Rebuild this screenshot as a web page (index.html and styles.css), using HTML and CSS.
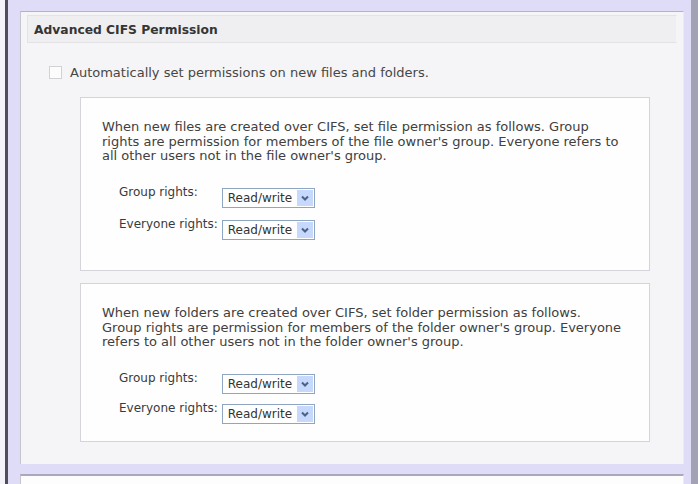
FILE: index.html
```html
<!DOCTYPE html>
<html>
<head>
<meta charset="utf-8">
<link rel="stylesheet" href="styles.css">
</head>
<body>
<div class="page">
  <div class="panel">
    <div class="panel-head">Advanced CIFS Permission</div>
    <label class="auto-row"><span class="check"></span><span>Automatically set permissions on new files and folders.</span></label>

    <div class="box box-files">
      <p class="desc">When new files are created over CIFS, set file permission as follows. Group<br>rights are permission for members of the file owner's group. Everyone refers to<br>all other users not in the file owner's group.</p>
      <div class="rights">
        <span class="lbl">Group rights:</span>
        <span class="sel"><select><option>Read/write</option></select><svg class="btn" width="16" height="16" viewBox="0 0 16 16"><rect x="0" y="0" width="16" height="16" fill="#c6d8fc"/><path d="M5 6.5 L8 9.5 L11 6.5" fill="none" stroke="#4d6185" stroke-width="2"/></svg></span>
        <span class="lbl">Everyone rights:</span>
        <span class="sel"><select><option>Read/write</option></select><svg class="btn" width="16" height="16" viewBox="0 0 16 16"><rect x="0" y="0" width="16" height="16" fill="#c6d8fc"/><path d="M5 6.5 L8 9.5 L11 6.5" fill="none" stroke="#4d6185" stroke-width="2"/></svg></span>
      </div>
    </div>

    <div class="box box-folders">
      <p class="desc">When new folders are created over CIFS, set folder permission as follows.<br>Group rights are permission for members of the folder owner's group. Everyone<br>refers to all other users not in the folder owner's group.</p>
      <div class="rights">
        <span class="lbl">Group rights:</span>
        <span class="sel"><select><option>Read/write</option></select><svg class="btn" width="16" height="16" viewBox="0 0 16 16"><rect x="0" y="0" width="16" height="16" fill="#c6d8fc"/><path d="M5 6.5 L8 9.5 L11 6.5" fill="none" stroke="#4d6185" stroke-width="2"/></svg></span>
        <span class="lbl">Everyone rights:</span>
        <span class="sel"><select><option>Read/write</option></select><svg class="btn" width="16" height="16" viewBox="0 0 16 16"><rect x="0" y="0" width="16" height="16" fill="#c6d8fc"/><path d="M5 6.5 L8 9.5 L11 6.5" fill="none" stroke="#4d6185" stroke-width="2"/></svg></span>
      </div>
    </div>
  </div>
  <div class="panel next"></div>
</div>
</body>
</html>
```

FILE: styles.css
```css
html, body {
  margin: 0;
  padding: 0;
  height: 484px;
  overflow: hidden;
  background: #f4f2fa;
}
body {
  font-family: "DejaVu Sans", Verdana, sans-serif;
  font-size: 13px;
  color: #404040;
}
.page {
  margin-left: 5px;
  height: 484px;
  box-sizing: border-box;
  border-left: 3px solid #4f4e5a;
  border-right: 7px solid #a3a2b4;
  background: #dedcf7;
  padding: 11px 7px 0 12px;
  display: flex;
  flex-direction: column;
  gap: 10px;
}
.panel {
  background: #f5f4f6;
  border-top: 1px solid #b3b2c6;
  border-left: 1px solid #c6c5cd;
  border-right: 1px solid #ececf0;
  padding: 3px 6px 22px;
  flex: none;
}
.panel.next {
  background: #fdfdfd;
  border-top: 2px solid #a9a8bc;
  flex: 1;
  padding: 0;
}
.panel-head {
  height: 28px;
  line-height: 28px;
  box-sizing: border-box;
  background: #efeef0;
  border: 1px solid #e3e3e6;
  border-right-color: #f5f5f7;
  padding-left: 6px;
  font-weight: bold;
  font-size: 12.3px;
  color: #353535;
}
.auto-row {
  display: flex;
  align-items: center;
  gap: 8px;
  margin: 23px 0 0 22px;
  height: 13px;
  color: #474747;
}
.check {
  width: 11px;
  height: 11px;
  border: 1px solid #d2d1d6;
  background: #fcfcfc;
  flex: none;
}
.box {
  background: #fefefe;
  border: 1px solid #d6d3da;
  margin: 0 27px 0 53px;
  padding: 22px 10px 0 21px;
}
.box-files {
  margin-top: 18px;
  height: 174px;
  box-sizing: border-box;
}
.box-folders {
  margin-top: 12px;
  height: 159px;
  box-sizing: border-box;
}
.desc {
  margin: 0;
  line-height: 14.5px;
  color: #404040;
  white-space: nowrap;
}
.rights {
  display: grid;
  grid-template-columns: max-content max-content;
  column-gap: 4px;
  row-gap: 9px;
  align-items: start;
  margin: 21px 0 0 17px;
  font-size: 12px;
}
.box-folders .rights {
  margin-top: 21px;
  row-gap: 7px;
}
.lbl {
  line-height: 14px;
  color: #3a3a3a;
}
.sel {
  position: relative;
  display: block;
  width: 93px;
  height: 20px;
  margin-top: 3px;
}
.sel select {
  appearance: none;
  -webkit-appearance: none;
  width: 93px;
  height: 20px;
  margin: 0;
  box-sizing: border-box;
  border: 1px solid #8ea6c2;
  border-radius: 0;
  background: #fff;
  padding: 0 0 0 5px;
  font-family: "DejaVu Sans", Verdana, sans-serif;
  font-size: 12px;
  color: #333;
  line-height: 18px;
}
.sel .btn {
  position: absolute;
  right: 2px;
  top: 2px;
  pointer-events: none;
}
```
